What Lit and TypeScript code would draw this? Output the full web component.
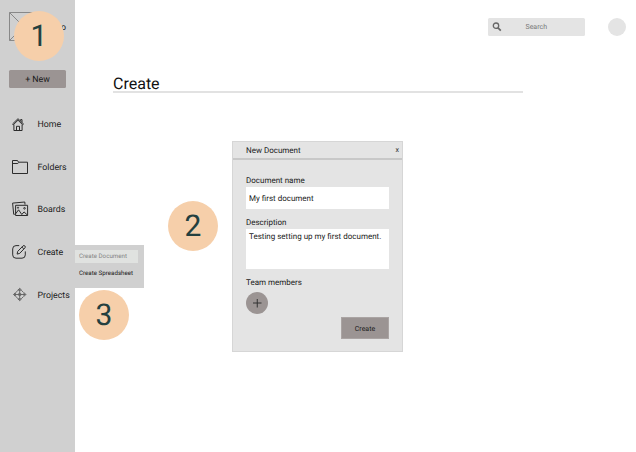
import { LitElement, html, css, svg } from "lit";
import { customElement, property } from "lit/decorators.js";

const icons: Record<string, unknown> = {
  Home: svg`<path d="M.5 8 6 2.700 11.500 8l-.8.8L6 4.200 1.300 8.800zM1.900 8.600v5.900h8.200V8.600M4.500 14.500v-4.200h3v4.200M8.600 4.800V3.600h1.400v2.800"/>`,
  Folders: svg`<path d="M.5 14.500v-13h5l1 1.700h9v11.300zM.5 4.500h5.300l1-1.100"/>`,
  Boards: svg`<path d="M3.600 4.300h12v10.200h-12zM3.600 12.800l3-4 3.200 4.700 2.200-2.600 3.600 3.300M2.800 13.300H1.700L.6 2.100 12.800 1l.2 2.600"/><circle cx="6" cy="6.700" r=".6"/><circle cx="12.500" cy="7.300" r=".8"/>`,
  Create: svg`<path d="M7.200 1.600H4Q.7 1.600.7 4.900v6Q.7 14.200 4 14.200h6q3.300 0 3.300-3.300V7.400M5.100 10.100l.6-2.700 5.300-5.500q1-.8 1.900.1t.1 1.800L7.700 9.400zM9.900 3.100l1.900 1.800"/>`,
  Projects: svg`<path d="M7.700 2.500v12M1.700 8.500h12M5.800 4.200l1.900-1.900 1.900 1.900zM5.800 12.800l1.900 1.900 1.900-1.900zM3.400 6.600 1.500 8.500l1.900 1.900zM12 6.600l1.900 1.900-1.900 1.900zM4 6.300l1.800-1.700M9.600 4.600l1.800 1.700M4 10.700l1.800 1.700M9.600 12.400l1.800-1.700"/><circle cx="7.700" cy="8.500" r="1.300"/>`,
};

@customElement("step-badge")
class StepBadge extends LitElement {
  static styles = css`
    :host {
      position: absolute;
      width: 50px;
      height: 50px;
      border-radius: 50%;
      background: #f6cfaa;
      color: #24403f;
      font: 30px/52px Roboto, sans-serif;
      text-align: center;
    }
  `;
  render() {
    return html`<slot></slot>`;
  }
}

@customElement("nav-item")
class NavItem extends LitElement {
  @property() label = "";
  static styles = css`
    :host {
      display: flex;
      align-items: center;
      height: 17px;
      padding-left: 12px;
      color: #1c1c1c;
    }
    svg {
      width: 17px;
      height: 17px;
      flex: none;
      margin-right: 8.500px;
      fill: none;
      stroke: #2c2c2c;
      stroke-width: 1;
    }
    .fine {
      stroke: #606060;
      stroke-width: 0.9;
    }
    span {
      white-space: nowrap;
      padding-top: 1.400px;
    }
  `;
  render() {
    return html`<svg class=${this.label === "Projects" ? "fine" : ""} viewBox="0 0 17 17">${icons[this.label]}</svg
      ><span>${this.label}</span>`;
  }
}

@customElement("app-root")
class AppRoot extends LitElement {
  static styles = css`
    * {
      box-sizing: border-box;
    }
    :host {
      display: flex;
      position: relative;
      width: 636px;
      height: 452px;
      overflow: hidden;
      background: #fff;
      color: #1a1a1a;
      font: 8.800px/10px Roboto, sans-serif;
      text-rendering: geometricPrecision;
    }
    aside {
      width: 75px;
      flex: none;
      background: #d0d0d0;
      padding-top: 12px;
    }
    .logo {
      display: flex;
      align-items: center;
      height: 29px;
      margin: 0 9px;
      width: 57px;
    }
    .logo svg {
      width: 29px;
      height: 29px;
      flex: none;
      fill: none;
      stroke: #888;
    }
    .logo span {
      width: 28px;
      padding-top: 2px;
      text-align: right;
    }
    .new {
      width: 57px;
      height: 18px;
      margin: 29px 0 0 9px;
      border-radius: 1.500px;
      background: #9b9493;
      line-height: 20px;
      text-align: center;
    }
    nav {
      display: grid;
      gap: 25.600px;
      margin-top: 28px;
    }
    main {
      flex: 1;
      padding: 18px 10px 0 38px;
    }
    .top {
      display: flex;
      justify-content: flex-end;
      align-items: center;
      gap: 23px;
      height: 18px;
    }
    .search {
      display: flex;
      align-items: center;
      width: 97px;
      height: 18px;
      padding-left: 4px;
      border-radius: 1.500px;
      background: #e4e4e4;
      color: #777;
      font-size: 7px;
    }
    .search svg {
      width: 10px;
      height: 10px;
      margin-right: 23.500px;
      fill: none;
      stroke: #666;
    }
    .avatar {
      width: 18px;
      height: 18px;
      border-radius: 50%;
      background: #e4e4e4;
    }
    h1 {
      width: 410px;
      height: 20px;
      margin: 37px 0 0;
      border-bottom: 2px solid #e2e2e2;
      font: 16px/22px Roboto, sans-serif;
      color: #111;
    }
    .menu {
      position: absolute;
      left: 75px;
      top: 245px;
      width: 69px;
      height: 43px;
      padding-top: 5px;
      background: #d0d0d0;
      font-size: 6.200px;
    }
    .menu div {
      width: 63px;
      height: 13px;
      line-height: 13px;
      padding-left: 4px;
      margin-bottom: 4px;
      white-space: nowrap;
    }
    .menu .active {
      background: #e0e2e0;
      color: #858585;
    }
    .dialog {
      position: absolute;
      left: 232px;
      top: 141px;
      width: 171px;
      height: 211px;
      border: 1px solid #d6d6d6;
      background: #e4e4e4;
      font-size: 8px;
    }
    .title {
      display: flex;
      justify-content: space-between;
      height: 18px;
      padding: 0 3px 0 13px;
      border-bottom: 2px solid #c8c8c8;
      line-height: 18px;
    }
    .title span:last-child {
      font-size: 7px;
      line-height: 16px;
    }
    .form {
      display: flex;
      flex-direction: column;
      padding: 16px 13px 0;
    }
    .field {
      height: 22px;
      margin: 1px 0 9px;
      padding: 0 3px;
      background: #fff;
      line-height: 23px;
      white-space: nowrap;
    }
    .area {
      height: 40px;
      line-height: 15px;
    }
    .add {
      width: 22px;
      height: 22px;
      margin-top: 4px;
      border-radius: 50%;
      background: #9b9493;
    }
    .add svg {
      display: block;
      fill: none;
      stroke: #333;
    }
    .submit {
      align-self: flex-end;
      width: 48px;
      height: 22px;
      margin-top: 3px;
      border: 1px solid #aaa4a3;
      background: #9b9493;
      font-size: 7px;
      line-height: 22px;
      text-align: center;
    }
    .one {
      left: 14px;
      top: 11px;
    }
    .two {
      left: 168px;
      top: 201px;
    }
    .three {
      left: 79px;
      top: 290px;
    }
  `;
  render() {
    return html`
      <aside>
        <div class="logo">
          <svg viewBox="0 0 29 29"><path d="M.5.5h28v28H.5zl28 28M28.500.5l-28 28" /></svg><span>o</span>
        </div>
        <div class="new">+ New</div>
        <nav>${Object.keys(icons).map((l) => html`<nav-item label=${l}></nav-item>`)}</nav>
      </aside>
      <main>
        <div class="top">
          <div class="search">
            <svg viewBox="0 0 10 10"><circle cx="4" cy="3.700" r="2.700" stroke-width="1.300" /><path d="m6 5.900 2.800 2.700" stroke-width="1.700" /></svg>
            <span>Search</span>
          </div>
          <div class="avatar"></div>
        </div>
        <h1>Create</h1>
      </main>
      <div class="menu">
        <div class="active">Create Document</div>
        <div>Create Spreadsheet</div>
      </div>
      <section class="dialog">
        <div class="title"><span>New Document</span><span>x</span></div>
        <div class="form">
          <span>Document name</span>
          <div class="field">My first document</div>
          <span>Description</span>
          <div class="field area">Testing setting up my first document.</div>
          <span>Team members</span>
          <div class="add"><svg width="22" height="22"><path d="M7 11h8.500M11.250 7v8.500" /></svg></div>
          <div class="submit">Create</div>
        </div>
      </section>
      <step-badge class="one">1</step-badge>
      <step-badge class="two">2</step-badge>
      <step-badge class="three">3</step-badge>
    `;
  }
}
